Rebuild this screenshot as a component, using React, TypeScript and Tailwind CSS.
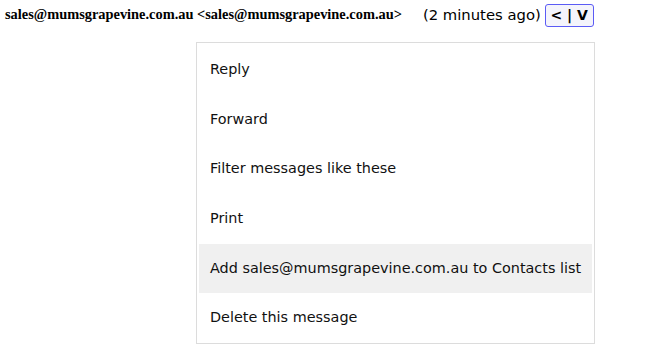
import React from "react";

const menuItems = [
  "Reply",
  "Forward",
  "Filter messages like these",
  "Print",
  "Add sales@mumsgrapevine.com.au to Contacts list",
  "Delete this message",
];

const App = () => {
  return (
    <div className="w-[660px] h-[354px] bg-white text-black overflow-hidden">
      <div className="flex items-center h-[24px] mt-[3px] pl-[5px]">
        <span className="font-['Liberation_Serif',serif] font-bold text-[14.4px] whitespace-nowrap">
          sales@mumsgrapevine.com.au &lt;sales@mumsgrapevine.com.au&gt;
        </span>
        <span className="ml-[21px] font-['DejaVu_Sans',Verdana,sans-serif] text-[14.8px] whitespace-nowrap">
          (2 minutes ago)
        </span>
        <div className="ml-[4px] h-[23px] w-[49px] justify-center flex items-center border-[1.5px] border-[#5b5bf5] rounded-[3px] bg-[#f4f4fb] font-['DejaVu_Sans',Verdana,sans-serif] font-bold text-[14px] whitespace-nowrap">
          &lt; | V
        </div>
      </div>

      <div className="ml-[196px] mt-[15px] w-[399px] h-[302px] border border-[#dcdcdc] p-[2px] bg-white">
        {menuItems.map((item, i) => (
          <div
            key={item}
            className={
              "h-[49.7px] flex items-center pl-[11px] font-['DejaVu_Sans',Verdana,sans-serif] text-[14.4px] text-[#111] whitespace-nowrap " +
              (i === 4 ? "bg-[#f0f0f0]" : "")
            }
          >
            {item}
          </div>
        ))}
      </div>
    </div>
  );
};

export default App;
